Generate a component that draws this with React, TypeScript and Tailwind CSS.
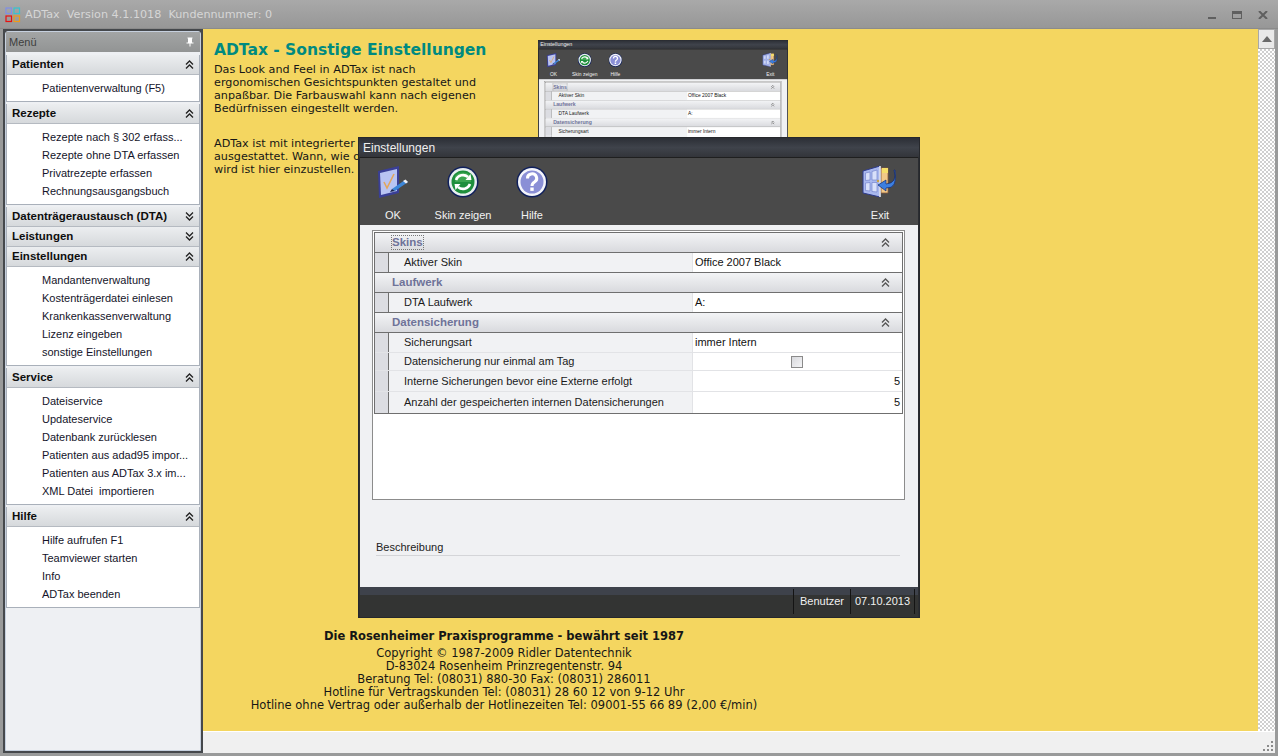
import React from 'react';

const uiFont = 'font-["Liberation_Sans",sans-serif] text-[11px]';

const menu = [
  { title: 'Patienten', open: true, items: ['Patientenverwaltung (F5)'] },
  { title: 'Rezepte', open: true, items: ['Rezepte nach § 302 erfass...', 'Rezepte ohne DTA erfassen', 'Privatrezepte erfassen', 'Rechnungsausgangsbuch'] },
  { title: 'Datenträgeraustausch (DTA)', open: false, items: [] },
  { title: 'Leistungen', open: false, items: [] },
  { title: 'Einstellungen', open: true, items: ['Mandantenverwaltung', 'Kostenträgerdatei einlesen', 'Krankenkassenverwaltung', 'Lizenz eingeben', 'sonstige Einstellungen'] },
  { title: 'Service', open: true, items: ['Dateiservice', 'Updateservice', 'Datenbank zurücklesen', 'Patienten aus adad95 impor...', 'Patienten aus ADTax 3.x im...', 'XML Datei  importieren'] },
  { title: 'Hilfe', open: true, items: ['Hilfe aufrufen F1', 'Teamviewer starten', 'Info', 'ADTax beenden'] },
];

function Chevrons({ up = true, color = '#333' }: { up?: boolean; color?: string }) {
  return (
    <svg width="9" height="9" viewBox="0 0 9 9" fill="none" stroke={color} strokeWidth="1.3" className="shrink-0">
      {up ? (
        <path d="M1 4.5 L4.5 1 L8 4.5 M1 8.5 L4.5 5 L8 8.5" />
      ) : (
        <path d="M1 0.5 L4.5 4 L8 0.5 M1 4.5 L4.5 8 L8 4.5" />
      )}
    </svg>
  );
}

function Logo() {
  return (
    <svg width="16" height="16" viewBox="0 0 16 16" fill="none" strokeWidth="1.2">
      <rect x="1" y="1" width="5.5" height="5.5" stroke="#7f8fe8" />
      <rect x="9" y="1" width="5.5" height="5.5" stroke="#35c4d0" />
      <rect x="1" y="9" width="5.5" height="5.5" stroke="#e81010" />
      <rect x="9" y="9" width="5.5" height="5.5" stroke="#f09a18" />
    </svg>
  );
}

function OkIcon() {
  return (
    <svg width="34" height="34" viewBox="0 0 34 34">
      <path d="M2 6 L23 1 L23 28 L3 33 Z" fill="#3a3f96" />
      <path d="M4 8 L21 4 L21 26 L5 30 Z" fill="#b9c4f2" />
      <path d="M8 17 L11 23 L18 9" fill="none" stroke="#e3a65b" strokeWidth="1.6" />
      <path d="M16 24 L29 15 L32 17 L19 26 Z" fill="#3c86d8" />
      <path d="M27 16 L29.5 14.5 L32 17 L30 18.5 Z" fill="#f0f0f4" />
      <path d="M16 24 L14 27 L19 26 Z" fill="#17224d" />
    </svg>
  );
}

function SkinIcon() {
  return (
    <svg width="32" height="32" viewBox="0 0 32 32">
      <circle cx="16" cy="16" r="15.5" fill="#10205c" />
      <circle cx="16" cy="16" r="14" fill="#e8eef0" />
      <circle cx="16" cy="16" r="11.5" fill="#1e8f3c" />
      <path d="M8 10 A 11 11 0 0 1 24 10 L24 16 L8 16 Z" fill="#4fb45e" opacity="0.6" />
      <path d="M9 14 A 7.5 7.5 0 0 1 21 11" fill="none" stroke="#fff" strokeWidth="2.6" />
      <path d="M18.5 14 L24.5 14 L23.5 8 Z" fill="#fff" />
      <path d="M23 18 A 7.5 7.5 0 0 1 11 21" fill="none" stroke="#fff" strokeWidth="2.6" />
      <path d="M13.5 18 L7.5 18 L8.5 24 Z" fill="#fff" />
    </svg>
  );
}

function HelpIcon() {
  return (
    <svg width="32" height="32" viewBox="0 0 32 32">
      <circle cx="16" cy="16" r="15.5" fill="#10205c" />
      <circle cx="16" cy="16" r="14" fill="#f4f5fb" />
      <circle cx="16" cy="16" r="11.5" fill="#8a8fd6" />
      <path d="M11.5 12.5 A 4.6 4.4 0 1 1 18.5 16 Q 16 17.4 16 20" fill="none" stroke="#fff" strokeWidth="3" />
      <rect x="14.3" y="21.5" width="3.4" height="3.4" fill="#fff" />
    </svg>
  );
}

function ExitIcon() {
  return (
    <svg width="36" height="34" viewBox="0 0 36 34">
      <path d="M19 3 L26 3 L26 28 L19 28 Z" fill="#f2c987" stroke="#8a5a3a" strokeWidth="0.8" />
      <path d="M20 3 L26 3 L26 8 L20 8 Z" fill="#f5de6a" />
      <path d="M1 6 L18 1 L18 32 L1 28 Z" fill="#a9b8ee" stroke="#2d3a8c" strokeWidth="1" />
      <path d="M18 1 L18 32" stroke="#fff" strokeWidth="1.4" />
      <path d="M3.5 8 L8 7 L8 15 L3.5 15.5 Z M10 6.5 L15 5 L15 15 L10 15 Z M3.5 18 L8 17.5 L8 26 L3.5 25.5 Z M10 17.5 L15 17.5 L15 27 L10 26.5 Z" fill="#d8e0fa" stroke="#6a78c8" strokeWidth="0.6" />
      <circle cx="16" cy="16" r="1.2" fill="#c8a040" />
      <path d="M32 5 Q 36 18 24 19 L24 15 L16 20 L24 26 L24 23 Q 36 24 33 5 Z" fill="#3c7fe0" stroke="#142a70" strokeWidth="0.7" />
    </svg>
  );
}

function ToolButton({ label, width, children }: { label: string; width: string; children: React.ReactNode }) {
  return (
    <div className={`flex flex-col items-center ${width}`}>
      <div className="h-[37px] mt-[5px] flex items-center justify-center">{children}</div>
      <span className="mt-[8px] leading-[14px] text-[#f2f2f2]">{label}</span>
    </div>
  );
}

function GroupRow({ title, focus = false }: { title: string; focus?: boolean }) {
  return (
    <div className="h-[20px] flex items-center justify-between bg-gradient-to-b from-[#f3f4f6] to-[#d9dade] border-b border-[#6f6f6f] pl-[17px] pr-[12px]">
      <span className={`font-bold text-[11.5px] text-[#6f7399] leading-[13px] ${focus ? 'outline-1 outline-dotted outline-[#777]' : ''}`}>{title}</span>
      <Chevrons color="#555" />
    </div>
  );
}

function PropRow({ label, height, strong = false, children }: { label: string; height: string; strong?: boolean; children?: React.ReactNode }) {
  return (
    <div className={`flex ${height} border-b ${strong ? 'border-[#6f6f6f]' : 'border-[#e2e3e6]'} last:border-b-0`}>
      <div className="w-[14px] bg-[#dcdde2] border-r border-[#6f6f6f] shrink-0" />
      <div className="w-[303px] shrink-0 bg-[#f1f2f4] pl-[15px] flex items-center text-[#1a1a1a]">{label}</div>
      <div className="flex-1 bg-white border-l border-[#e2e3e6] pl-[2px] pr-[2px] flex items-center text-[#111]">{children}</div>
    </div>
  );
}

function SettingsWindow() {
  return (
    <div className={`w-[562px] h-[481px] flex flex-col bg-[#2b2d31] border border-[#26282c] ${uiFont}`}>
      <div className="h-[19px] shrink-0 bg-gradient-to-b from-[#2c2f36] via-[#3f434b] to-[#33353a] flex items-center pl-[4px] text-[12px] text-[#f0f0f0]">
        Einstellungen
      </div>
      <div className="mx-[1px] h-[68px] shrink-0 bg-[#4a4a4a] border-t border-[#1f1f1f] flex">
        <ToolButton label="OK" width="w-[66px]"><OkIcon /></ToolButton>
        <ToolButton label="Skin zeigen" width="w-[74px]"><SkinIcon /></ToolButton>
        <ToolButton label="Hilfe" width="w-[64px]"><HelpIcon /></ToolButton>
        <div className="flex-1" />
        <ToolButton label="Exit" width="w-[64px] mr-[6px]"><ExitIcon /></ToolButton>
      </div>
      <div className="mx-[1px] flex-1 bg-[#f0f1f3] px-[12px] pt-[5px] flex flex-col">
        <div className="w-[533px] h-[270px] border border-[#8c8c8c] bg-white px-[1px] pt-[1px]">
          <div className="border border-[#6f6f6f]">
            <GroupRow title="Skins" focus />
            <PropRow label="Aktiver Skin" height="h-[20px]" strong>Office 2007 Black</PropRow>
            <GroupRow title="Laufwerk" />
            <PropRow label="DTA Laufwerk" height="h-[20px]" strong>A:</PropRow>
            <GroupRow title="Datensicherung" />
            <PropRow label="Sicherungsart" height="h-[20px]">immer Intern</PropRow>
            <PropRow label="Datensicherung nur einmal am Tag" height="h-[18px]">
              <div className="mx-auto w-[12px] h-[12px] border border-[#8a8a8a] bg-gradient-to-br from-[#d8d9dd] to-[#f4f4f6] translate-x-[-1px]" />
            </PropRow>
            <PropRow label="Interne Sicherungen bevor eine Externe erfolgt" height="h-[21px]">
              <span className="ml-auto">5</span>
            </PropRow>
            <PropRow label="Anzahl der gespeicherten internen Datensicherungen" height="h-[21px]">
              <span className="ml-auto">5</span>
            </PropRow>
          </div>
        </div>
        <div className="w-[524px] ml-[4px] mt-[40px] text-[#222] leading-[14px] pb-[1px] border-b border-[#d4d5d8]">Beschreibung</div>
      </div>
      <div className="mx-[1px] h-[30px] shrink-0 bg-gradient-to-b from-[#3e424b] from-[28%] to-[#333433] to-[28%] flex justify-end text-[#f0f0f0] pr-[3px] pt-[2px] pb-[3px]">
        <div className="w-[57px] flex items-center justify-center border-l border-[#141414]">Benutzer</div>
        <div className="w-[65px] flex items-center justify-center border-x border-[#141414]">07.10.2013</div>
      </div>
    </div>
  );
}

function Sidebar() {
  return (
    <aside className={`w-[200px] shrink-0 bg-[#45484c] p-[2px] ${uiFont}`}>
      <div className="h-full bg-[#eef0f3] border border-[#c6d0de] rounded-t-[3px] flex flex-col">
        <div className="h-[20px] shrink-0 flex items-center justify-between pl-[3px] pr-[5px] bg-gradient-to-b from-[#a3a5a5] to-[#929494] text-[#3e3e3e]">
          Menü
          <svg width="10" height="10" viewBox="0 0 10 10" fill="#fff">
            <path d="M2.5 0.5 H7.5 V1.5 H7 V5.5 H8.5 V6.5 H5.5 V9.5 H4.5 V6.5 H1.5 V5.5 H3 V1.5 H2.5 Z" />
          </svg>
        </div>
        <div className="flex flex-col">
          {menu.map((section, i) => (
            <div key={section.title} className={`border-x border-[#a9b0ba] ${section.open ? 'mb-[2px]' : ''} ${i === 0 ? 'mt-[3px]' : ''}`}>
              <div className="h-[20px] flex items-center justify-between pl-[5px] pr-[5px] bg-gradient-to-b from-[#eceef0] to-[#d6d9dc] border-b border-[#b5bac1]">
                <span className="font-bold text-[11.5px] text-[#0e0e0e]">{section.title}</span>
                <Chevrons up={section.open} color="#222" />
              </div>
              {section.open && (
                <ul className="bg-white pt-[4px] pb-[4px] pl-[35px] border-b border-[#a9b0ba]">
                  {section.items.map((item) => (
                    <li key={item} className="h-[18px] flex items-center whitespace-pre text-[#14142a]">{item}</li>
                  ))}
                </ul>
              )}
            </div>
          ))}
        </div>
      </div>
    </aside>
  );
}

export default function App() {
  return (
    <div className="relative w-[1278px] h-[756px] overflow-hidden bg-[#999a9a] flex flex-col font-['DejaVu_Sans',sans-serif]">
      <header className="h-[29px] shrink-0 flex items-center justify-between bg-gradient-to-b from-[#a9a9a9] to-[#979797] border-b border-[#8b8b8b] pl-[5px] pt-[2px]">
        <div className="flex items-center gap-[4px] text-[11.2px] text-[#d6d6d6]">
          <Logo />
          <span className="whitespace-pre">ADTax  Version 4.1.1018  Kundennummer: 0</span>
        </div>
        <div className="flex items-center gap-[16px] pr-[10px]">
          <div className="w-[8px] h-[2px] bg-[#5f5f5f] mt-[5px]" />
          <div className="w-[10px] h-[8px] border border-[#5f5f5f] border-t-[3px]" />
          <svg width="10" height="8" viewBox="0 0 10 8" stroke="#5f5f5f" strokeWidth="2"><path d="M1 0 L9 8 M9 0 L1 8" /></svg>
        </div>
      </header>
      <div className="flex-1 flex min-h-0 pl-[3px] pr-[3px] pb-[3px]">
        <Sidebar />
        <main className="flex-1 flex flex-col min-w-0">
          <div className="flex-1 flex min-h-0">
            <div className="flex-1 bg-[#f4d660] pt-[10px] text-[#161616] text-[11.2px] leading-[13px]">
              <div className="flex h-[590px]">
                <div className="w-[335px] shrink-0 pl-[11px]">
                  <h1 className="text-[15.5px] leading-[22px] font-bold text-[#008a80]">ADTax - Sonstige Einstellungen</h1>
                  <p className="mt-[2px] whitespace-pre">
                    Das Look and Feel in ADTax ist nach{'\n'}ergonomischen Gesichtspunkten gestaltet und{'\n'}anpaßbar. Die Farbauswahl kann nach eigenen{'\n'}Bedürfnissen eingestellt werden.
                  </p>
                  <p className="mt-[22px] whitespace-pre">
                    ADTax ist mit integrierter Datensicherung{'\n'}ausgestattet. Wann, wie oft und wohin gesichert{'\n'}wird ist hier einzustellen.
                  </p>
                </div>
                <div className="w-[250px] h-[110px] mt-[1px] overflow-hidden">
                  <div className="origin-top-left scale-[0.445] w-[562px]">
                    <SettingsWindow />
                  </div>
                </div>
              </div>
              <div className="w-[602px] text-center text-[11.5px]">
                <p className="font-bold leading-[14px]">Die Rosenheimer Praxisprogramme - bewährt seit 1987</p>
                <p className="mt-[4px]">Copyright © 1987-2009 Ridler Datentechnik</p>
                <p>D-83024 Rosenheim Prinzregentenstr. 94</p>
                <p>Beratung Tel: (08031) 880-30 Fax: (08031) 286011</p>
                <p>Hotline für Vertragskunden Tel: (08031) 28 60 12 von 9-12 Uhr</p>
                <p>Hotline ohne Vertrag oder außerhalb der Hotlinezeiten Tel: 09001-55 66 89 (2,00 €/min)</p>
              </div>
            </div>
            <div className="w-[17px] shrink-0 flex flex-col bg-[repeating-conic-gradient(#cfcfcf_0_25%,#ffffff_0_50%)] bg-[length:4px_4px]">
              <div className="h-[20px] bg-[#e9e9e9] border border-[#a8a8a8] flex items-center justify-center">
                <svg width="10" height="6" viewBox="0 0 10 6" fill="#6a6a6a"><path d="M5 0 L10 6 H0 Z" /></svg>
              </div>
            </div>
          </div>
          <div className="h-[22px] shrink-0 bg-[#f0f0f0] border-t border-white flex justify-end items-end pr-[2px] pb-[2px]">
            <div className="grid grid-cols-3 gap-[2px]">
              <span className="w-[2px] h-[2px]" />
              <span className="w-[2px] h-[2px]" />
              <span className="w-[2px] h-[2px] bg-[#8a8a8a]" />
              <span className="w-[2px] h-[2px]" />
              <span className="w-[2px] h-[2px] bg-[#8a8a8a]" />
              <span className="w-[2px] h-[2px] bg-[#8a8a8a]" />
              <span className="w-[2px] h-[2px] bg-[#8a8a8a]" />
              <span className="w-[2px] h-[2px] bg-[#8a8a8a]" />
              <span className="w-[2px] h-[2px] bg-[#8a8a8a]" />
            </div>
          </div>
        </main>
      </div>
      <div className="absolute left-[358px] top-[137px]">
        <SettingsWindow />
      </div>
    </div>
  );
}
